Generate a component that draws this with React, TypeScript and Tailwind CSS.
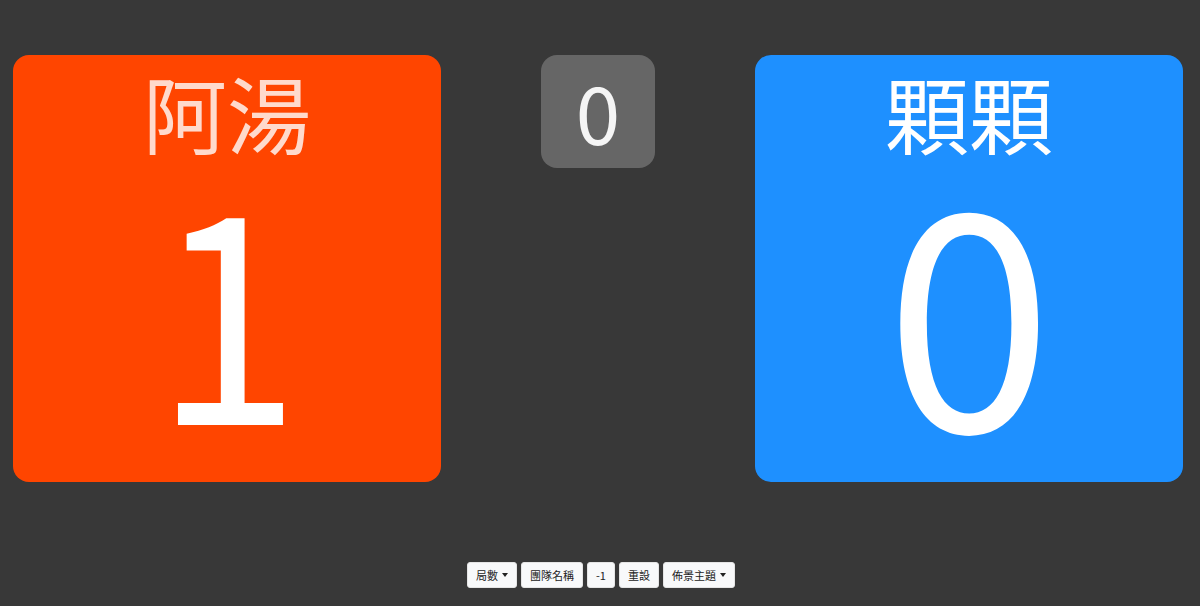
import React from "react";

const font = { fontFamily: '"Noto Sans CJK TC", "Noto Sans CJK SC", sans-serif' };

function Caret() {
  return <span className="inline-block ml-[4px] w-0 h-0 border-l-[3.5px] border-r-[3.5px] border-t-[4px] border-l-transparent border-r-transparent border-t-[#222] align-middle"></span>;
}

function Btn({ children, caret }: { children: React.ReactNode; caret?: boolean }) {
  return (
    <button className="h-[26px] px-[8px] bg-[#f8f9fa] border border-[#e5e5e5] rounded-[3px] text-[11px] text-[#222] leading-none flex items-center">
      {children}
      {caret && <Caret />}
    </button>
  );
}

export default function App() {
  return (
    <div className="w-[1200px] h-[606px] bg-[#383838] overflow-hidden flex flex-col" style={font}>
      <div className="flex pl-[13px] pt-[55px]">
        <div className="w-[428px] h-[427px] bg-[#ff4500] rounded-[16px] flex flex-col items-center">
          <div className="text-[84px] leading-none mt-[15px] text-white/80">阿湯</div>
          <div className="text-[290px] leading-none text-white mt-[0px] scale-x-[0.9]">1</div>
        </div>
        <div className="w-[314px] flex justify-center">
          <div className="w-[114px] h-[113px] bg-[#666666] rounded-[16px] flex items-center justify-center text-[80px] leading-none text-[#f5f5f5] pb-[4px]">0</div>
        </div>
        <div className="w-[428px] h-[427px] bg-[#1e90ff] rounded-[16px] flex flex-col items-center">
          <div className="text-[84px] leading-none mt-[15px] text-white">顆顆</div>
          <div className="text-[302px] leading-none text-white mt-[-4px]">0</div>
        </div>
      </div>
      <div className="flex justify-center gap-[4px] mt-[80px] pl-[2px]">
        <Btn caret>局數</Btn>
        <Btn>團隊名稱</Btn>
        <Btn>-1</Btn>
        <Btn>重設</Btn>
        <Btn caret>佈景主題</Btn>
      </div>
    </div>
  );
}
